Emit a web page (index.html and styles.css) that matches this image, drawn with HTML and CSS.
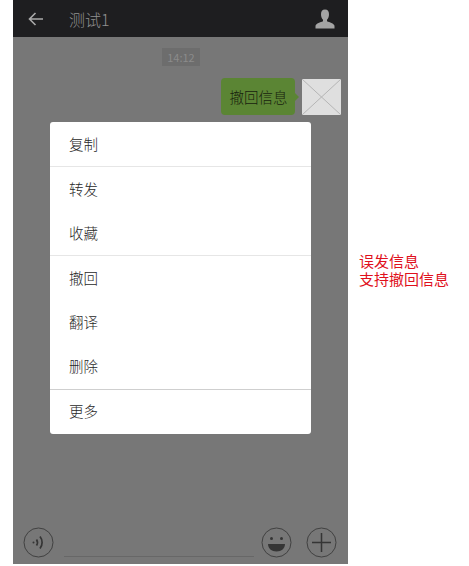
FILE: index.html
```html
<!DOCTYPE html>
<html>
<head>
<meta charset="utf-8"/>
<title>测试1</title>
<link rel="stylesheet" href="styles.css">
</head>
<body>

<div class="phone">
  <div class="topbar">
    <svg class="back" width="16" height="14" viewBox="0 0 16 14"><path d="M15 7H2M7.500 1L1.500 7l6 6" fill="none" stroke="#a9a9a9" stroke-width="1.600"/></svg>
    <span class="title">测试1</span>
    <svg class="user" width="20" height="20" viewBox="0 0 20 20"><path d="M10 0.500c2.800 0 4 2 4 4.800 0 2.300-.8 4.300-2 5.500v1.400c2.500 1.200 7 2 7.500 4.500v2.800H.5v-2.800c.5-2.500 5-3.300 7.500-4.500v-1.400C6.800 9.600 6 7.600 6 5.300 6 2.500 7.200 .5 10 .5z" fill="#a3a3a3"/></svg>
  </div>

  <div class="chat">
    <div class="time"><span>14:12</span></div>
    <div class="msg">
      <div class="bubble">撤回信息</div>
      <svg class="thumb" width="39" height="36" viewBox="0 0 39 36"><rect width="39" height="36" fill="#dfdfdf"/><path d="M0 0L39 36M39 0L0 36" stroke="#b5b5b5" stroke-width="1"/></svg>
    </div>
  </div>

  <div class="inputbar">
    <svg class="round" width="31" height="31" viewBox="0 0 31 31"><circle cx="15.500" cy="15.500" r="14.500" fill="none" stroke="#3f3f3f"/><circle cx="10.500" cy="15.500" r="1" fill="#333"/><path d="M13.500 12.500c1.300 2 1.300 4 0 6M17 9.500c2.800 3.500 2.800 8.500 0 12" fill="none" stroke="#333" stroke-width="1.700"/></svg>
    <div class="field"></div>
    <svg class="round" width="31" height="31" viewBox="0 0 31 31"><circle cx="15.500" cy="15.500" r="14.500" fill="none" stroke="#3f3f3f"/><circle cx="10.500" cy="11.500" r="1.500" fill="#333"/><circle cx="20.500" cy="11.500" r="1.500" fill="#333"/><path d="M7 17h17c0 4.500-3.500 7.500-8.500 7.500S7 21.500 7 17z" fill="#333"/></svg>
    <svg class="round plus" width="31" height="31" viewBox="0 0 31 31"><circle cx="15.500" cy="15.500" r="14.500" fill="none" stroke="#3f3f3f"/><path d="M15.500 6v19M6 15.500h19" fill="none" stroke="#333" stroke-width="1.500"/></svg>
  </div>

  <div class="menu">
    <div class="item line-light">复制</div>
    <div class="item">转发</div>
    <div class="item line-light">收藏</div>
    <div class="item">撤回</div>
    <div class="item">翻译</div>
    <div class="item line-dark">删除</div>
    <div class="item">更多</div>
  </div>
</div>

<div class="note">误发信息<br/>支持撤回信息</div>

</body>
</html>
```

FILE: styles.css
```css
body {
   margin: 0;
   background-color: white;
   font-family: "Noto Sans CJK SC", "Liberation Sans", sans-serif;
   display: flex;
   align-items: flex-start;
}

.phone {
   position: relative;
   width: 335px;
   height: 564px;
   margin-left: 13px;
   background-color: #767676;
   display: flex;
   flex-direction: column;
   opacity: 0.99;
}

.topbar {
   height: 37px;
   background-color: #1c1c1e;
   display: flex;
   align-items: center;
   padding: 0 13px 0 15px;
}

.title {
   margin-left: 25px;
   font-size: 16px;
   font-weight: 300;
   color: #8f8f8f;
   flex: 1;
}

.chat {
   flex: 1;
   padding: 11px 7px 0 0;
}

.time {
   display: flex;
   justify-content: center;
   height: 30px;
   margin-right: -7px;
   padding-left: 1px;
}

.time span {
   width: 38px;
   height: 18px;
   line-height: 18px;
   text-align: center;
   background-color: #6c6c6c;
   color: #8a8a8a;
   font-size: 11px;
}

.msg {
   display: flex;
   justify-content: flex-end;
   align-items: center;
   height: 37px;
}

.bubble {
   position: relative;
   width: 74px;
   height: 37px;
   line-height: 37px;
   margin-right: 7px;
   padding-left: 1px;
   box-sizing: border-box;
   background-color: #5a8432;
   border-radius: 4px;
   color: #16200c;
   font-size: 14.500px;
   font-weight: 300;
   text-align: center;
}

.bubble:after {
   content: "";
   position: absolute;
   right: -4px;
   top: 15px;
   border-left: 4px solid #5a8432;
   border-top: 4px solid transparent;
   border-bottom: 4px solid transparent;
}

.inputbar {
   height: 37px;
   display: flex;
   align-items: flex-start;
   padding: 0 11px 0 10px;
}

.field {
   flex: 1;
   height: 29px;
   margin: 0 7px 0 10px;
   border-bottom: 1px solid #666;
}

.plus {
   margin-left: 14px;
}

.menu {
   position: absolute;
   left: 37px;
   top: 122px;
   width: 261px;
   height: 312px;
   background-color: white;
   border-radius: 3px;
   display: flex;
   flex-direction: column;
}

.item {
   flex: 1;
   padding: 0 0 2px 19px;
   font-size: 14.500px;
   font-weight: 300;
   color: #262626;
   display: flex;
   align-items: center;
}

.line-light {
   border-bottom: 1px solid #e6e6e6;
}

.line-dark {
   border-bottom: 1px solid #cfcfcf;
}

.note {
   margin: 253px 0 0 11px;
   color: #e0101c;
   font-family: "Liberation Sans", "Noto Sans CJK SC", sans-serif;
   font-size: 15px;
   line-height: 18px;
   white-space: nowrap;
}
```
